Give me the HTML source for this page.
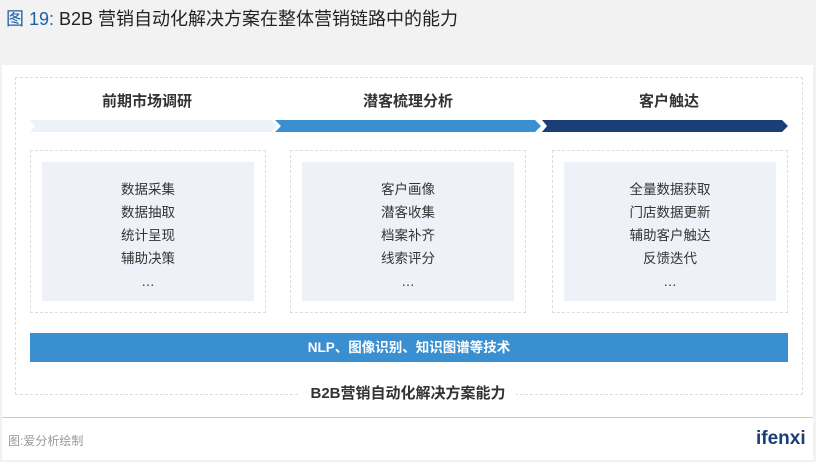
<!DOCTYPE html><html><head><meta charset="utf-8"><style>
body{margin:0;width:816px;height:462px;background:#f2f2f2;font-family:"Liberation Sans","Noto Sans CJK SC",sans-serif;position:relative;overflow:hidden}
.a{position:absolute}
.t{left:6px;top:5px;font-size:18px;color:#222}
.t b{color:#1f5fa8;font-weight:normal}
.panel{left:2px;top:65px;width:811px;height:352px;background:#fff;border-bottom:1px solid #ccc}
.foot{left:2px;top:418px;width:811px;height:42px;background:#fff}
.outer{left:15px;top:77px;width:786px;height:316px;border:1px dashed #ddd}
.h{top:90px;width:240px;text-align:center;font-size:15px;font-weight:bold;color:#333}
.box{top:150px;width:234px;height:161px;border:1px dashed #ddd}
.in{position:absolute;left:11px;top:11px;right:11px;bottom:11px;background:#eef2f8;text-align:center;font-size:13.5px;color:#333;line-height:23px;padding-top:16px}
.bar{left:30px;top:333px;width:758px;height:29px;background:#3a8fd0;color:#fff;text-align:center;line-height:29px;font-size:13.5px;font-weight:bold}
.cap{left:300px;top:382px;width:216px;background:#fff;text-align:center;font-size:15px;font-weight:bold;color:#333}
</style></head><body>
<div class="a t"><b>图 19:</b> B2B 营销自动化解决方案在整体营销链路中的能力</div>
<div class="a panel"></div><div class="a foot"></div>
<div class="a outer"></div>
<div class="a h" style="left:27px">前期市场调研</div>
<div class="a h" style="left:288px">潜客梳理分析</div>
<div class="a h" style="left:549px">客户触达</div>
<svg class="a" style="left:0;top:0" width="816" height="462">
<polygon points="30,120 271,120 277,126 271,132 30,132 35,126" fill="#edf2f9"/>
<polygon points="275,120 535,120 541,126 535,132 275,132 281,126" fill="#3a8fd0"/>
<polygon points="542,120 782,120 788,126 782,132 542,132 547,126" fill="#1a3e78"/>
</svg>
<div class="a box" style="left:30px"><div class="in">数据采集<br>数据抽取<br>统计呈现<br>辅助决策<br>…</div></div>
<div class="a box" style="left:290px"><div class="in">客户画像<br>潜客收集<br>档案补齐<br>线索评分<br>…</div></div>
<div class="a box" style="left:552px"><div class="in">全量数据获取<br>门店数据更新<br>辅助客户触达<br>反馈迭代<br>…</div></div>
<div class="a bar">NLP、图像识别、知识图谱等技术</div>
<div class="a cap">B2B营销自动化解决方案能力</div>
<div class="a" style="left:8px;top:432px;font-size:12px;color:#999">图:爱分析绘制</div>
<div class="a" style="left:756px;top:428px;font-size:19px;font-weight:bold;color:#1a3e78">ifenxi</div>
</body></html>
